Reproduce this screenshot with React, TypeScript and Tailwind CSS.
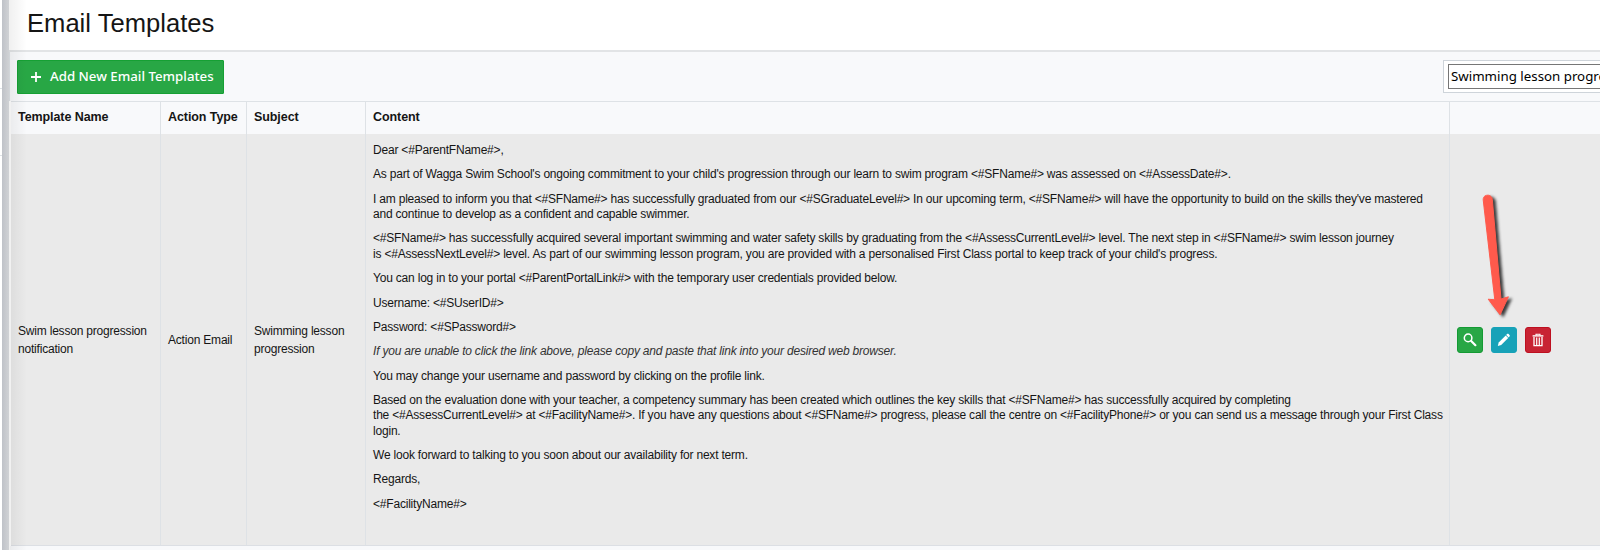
import React from "react";
import { clsx } from "clsx";

interface IconProps {
  className?: string;
}

const PlusIcon: React.FC<IconProps> = ({ className }) => (
  <svg viewBox="0 0 10 10" className={className} fill="currentColor">
    <path d="M4.1 0h1.8v4.1H10v1.8H5.9V10H4.1V5.9H0V4.1h4.1z" />
  </svg>
);

const SearchIcon: React.FC<IconProps> = ({ className }) => (
  <svg viewBox="0 0 14 14" className={className} fill="none" stroke="currentColor">
    <circle cx="5.1" cy="4.9" r="3.8" strokeWidth="1.5" />
    <path d="M8.2 8l4.2 4.2" strokeWidth="2.2" strokeLinecap="round" />
  </svg>
);

const PencilIcon: React.FC<IconProps> = ({ className }) => (
  <svg viewBox="0 0 14 14" className={className} fill="currentColor">
    <path d="M1.7 9.4l7-7 2.5 2.5-7 7L.8 12.9z" />
    <path d="M9.2 1.9l.8-.8c.5-.5 1.1-.5 1.6 0l.9.9c.5.5.5 1.1 0 1.6l-.8.8z" />
  </svg>
);

const TrashIcon: React.FC<IconProps> = ({ className }) => (
  <svg viewBox="0 0 12 14" className={className} fill="none" stroke="currentColor">
    <path d="M.6 2.9h10.8" strokeWidth="1.4" />
    <path d="M4 2.5V1.2h4v1.3" strokeWidth="1.1" />
    <path d="M2 4v8.6h8V4" strokeWidth="1.3" />
    <path d="M4.7 4.4v8M7.3 4.4v8" strokeWidth="1.2" />
  </svg>
);

const columns = ["Template Name", "Action Type", "Subject", "Content", ""];

/* Each paragraph is a list of lines. */
const paragraphs: { lines: string[]; italic?: boolean }[] = [
  { lines: ["Dear <#ParentFName#>,"] },
  {
    lines: [
      "As part of Wagga Swim School's ongoing commitment to your child's progression through our learn to swim program <#SFName#> was assessed on <#AssessDate#>.",
    ],
  },
  {
    lines: [
      "I am pleased to inform you that <#SFName#> has successfully graduated from our <#SGraduateLevel#> In our upcoming term, <#SFName#> will have the opportunity to build on the skills they've mastered",
      "and continue to develop as a confident and capable swimmer.",
    ],
  },
  {
    lines: [
      "<#SFName#> has successfully acquired several important swimming and water safety skills by graduating from the <#AssessCurrentLevel#> level. The next step in <#SFName#> swim lesson journey",
      "is <#AssessNextLevel#> level. As part of our swimming lesson program, you are provided with a personalised First Class portal to keep track of your child's progress.",
    ],
  },
  {
    lines: [
      "You can log in to your portal <#ParentPortalLink#> with the temporary user credentials provided below.",
    ],
  },
  { lines: ["Username: <#SUserID#>"] },
  { lines: ["Password: <#SPassword#>"] },
  {
    lines: [
      "If you are unable to click the link above, please copy and paste that link into your desired web browser.",
    ],
    italic: true,
  },
  {
    lines: [
      "You may change your username and password by clicking on the profile link.",
    ],
  },
  {
    lines: [
      "Based on the evaluation done with your teacher, a competency summary has been created which outlines the key skills that <#SFName#> has successfully acquired by completing",
      "the <#AssessCurrentLevel#> at <#FacilityName#>. If you have any questions about <#SFName#> progress, please call the centre on <#FacilityPhone#> or you can send us a message through your First Class",
      "login.",
    ],
  },
  {
    lines: [
      "We look forward to talking to you soon about our availability for next term.",
    ],
  },
  { lines: ["Regards,"] },
  { lines: ["<#FacilityName#>"] },
];

const actions = [
  { label: "View", Icon: SearchIcon, color: "bg-[#28a745] border-[#149a33]" },
  { label: "Edit", Icon: PencilIcon, color: "bg-[#17a2b8] border-[#17a2b8]" },
  { label: "Delete", Icon: TrashIcon, color: "bg-[#c82333] border-[#bd1020]" },
];

const grid = "grid grid-cols-[150px_86px_119px_1084px_1fr]";

const EmailBody: React.FC = () => (
  <div className="flex flex-col gap-[9.1px] whitespace-nowrap leading-[15.3px]">
    {paragraphs.map(({ lines, italic }) => (
      <p key={lines[0]} className={clsx(italic && "italic text-[#333]")}>
        {lines.map((line) => (
          <span key={line} className="block">
            {line}
          </span>
        ))}
      </p>
    ))}
  </div>
);

/* Red pointer over the action column. */
const Pointer: React.FC = () => (
  <svg
    viewBox="0 0 40 140"
    className="absolute left-[1474px] top-[186px] h-[140px] w-[40px] overflow-visible"
  >
    <g
      className="drop-shadow-[3px_2px_1.5px_rgba(0,0,0,0.75)]"
      fill="#ff5a4c"
      stroke="#ff5a4c"
      strokeLinejoin="round"
    >
      <path d="M9.2 13.8C8.8 7.8 18 7.6 18.3 13.4L27 113l7.4-2.2-8.3 18L14.2 113.2l6.6.6z" />
    </g>
  </svg>
);

export default function App() {
  return (
    <div className="relative flex h-[550px] w-[1600px] overflow-hidden bg-white font-['Liberation_Sans',Arial,sans-serif] text-[#151515]">
      {/* Edge of the page behind */}
      <div className="flex w-[2px] shrink-0 flex-col">
        <div className="h-[89px] border-b border-[#dee2e6]" />
        <div className="h-[67px] border-b border-[#dee2e6]" />
      </div>
      <div className="w-[7px] shrink-0 bg-linear-to-r from-[#bfc2c8] to-[#d0d2d5]" />
      <main className="flex min-w-0 flex-1 flex-col">
        <header className="flex h-[52px] shrink-0 items-center border-b-2 border-[#e2e4e6] pb-[3px] pl-[18px]">
          <h1 className="text-[25.6px] leading-none">Email Templates</h1>
        </header>

        <div className="flex h-[49px] shrink-0 items-center justify-between border-l border-[#dee2e6] bg-[#f8f9fb] pl-[7px]">
          <button className="flex h-[34px] w-[207px] items-center rounded-[1px] border border-[#16a034] bg-[#28a745] pl-[13px] font-['Noto_Sans',sans-serif] text-[13.25px] font-medium whitespace-nowrap text-white">
            <PlusIcon className="mr-[9px] size-[10px] shrink-0" />
            Add New Email Templates
          </button>
          <div className="h-[33px] w-[157px] border border-r-0 border-[#ced4da] bg-white py-[3px] pl-1">
            <div className="flex h-[25px] items-center overflow-hidden border border-r-0 border-[#767676] pl-[2px] font-['Noto_Sans',sans-serif] text-[13.3px] whitespace-nowrap text-black">
              Swimming lesson progression
            </div>
          </div>
        </div>

        <div
          className={clsx(
            grid,
            "ml-[2px] h-[33px] shrink-0 border-t border-[#dee2e6] bg-[#f8f9fb]",
          )}
        >
          {columns.map((column) => (
            <div
              key={column}
              className="flex items-center border-r border-[#dee2e6] pb-[2px] pl-[7px] text-[12.5px] font-bold tracking-[-0.08px] last:border-r-0"
            >
              {column}
            </div>
          ))}
        </div>

        <div
          className={clsx(
            grid,
            "ml-[2px] h-[412px] shrink-0 border-b border-[#dcdfe4] bg-[#eaeaea]",
            "text-[12px] leading-[18px] tracking-[-0.2px] *:border-r *:border-[#dee2e6] *:last:border-r-0",
          )}
        >
          <div className="flex items-center pl-[7px]">
            Swim lesson progression
            <br />
            notification
          </div>
          <div className="flex items-center pl-[7px]">Action Email</div>
          <div className="flex items-center pr-4 pl-[7px]">
            Swimming lesson progression
          </div>
          <div className="pt-[9px] pl-[7px]">
            <EmailBody />
          </div>
          <div className="flex items-center gap-2 pl-[7px]">
            {actions.map(({ label, Icon, color }) => (
              <button
                key={label}
                aria-label={label}
                className={clsx(
                  "flex size-[26px] items-center justify-center rounded-[3px] border text-white",
                  color,
                )}
              >
                <Icon className="size-[14px]" />
              </button>
            ))}
          </div>
        </div>
        <div className="ml-px flex-1 bg-[#f8f9fb]" />
      </main>

      {/* Soft shadow falling on the panel's left side */}
      <div className="pointer-events-none absolute inset-y-0 left-[9px] w-[18px] bg-linear-to-r from-black/6 to-transparent" />
      <Pointer />
    </div>
  );
}
